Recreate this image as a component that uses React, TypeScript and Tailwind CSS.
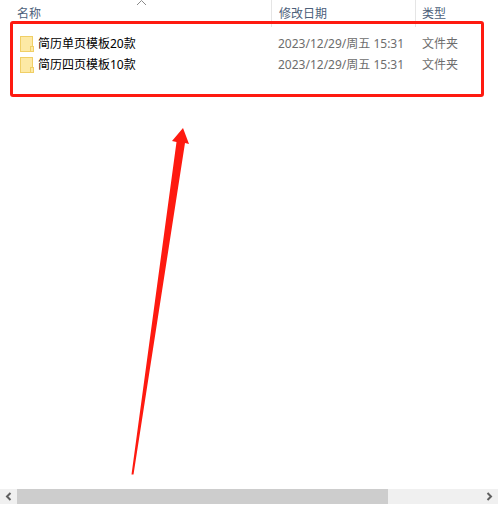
const files = [
  { name: "简历单页模板20款", date: "2023/12/29/周五 15:31", type: "文件夹" },
  { name: "简历四页模板10款", date: "2023/12/29/周五 15:31", type: "文件夹" },
];

const FolderIcon = () => (
  <svg width="14" height="16" viewBox="0 0 14 16" className="shrink-0">
    <rect x="0.5" y="0.5" width="12" height="15" fill="#fde9a5" stroke="#f0cf66" />
    <rect x="10.5" y="10.5" width="3" height="5" fill="#fde9a5" stroke="#f0cf66" />
  </svg>
);

const App = () => {
  return (
    <div
      className="relative flex h-[505px] w-[499px] flex-col overflow-hidden bg-white text-[12px]"
      style={{ fontFamily: '"Noto Sans", "Noto Sans CJK SC", sans-serif' }}
    >
      {/* Header */}
      <div className="flex h-[27px] text-[#4c607a]">
        <div className="relative w-[271px] pl-[17px] pt-[5px]">
          名称
          <svg
            width="11"
            height="6"
            viewBox="0 0 11 6"
            className="absolute left-[136px] top-0"
          >
            <path d="M1 5 L5.5 0.5 L10 5" fill="none" stroke="#8a8a8a" />
          </svg>
        </div>
        <div className="w-[144px] border-l border-[#e5e5e5] pl-[7px] pt-[5px]">修改日期</div>
        <div className="flex-1 border-l border-[#e5e5e5] pl-[6px] pt-[5px]">类型</div>
      </div>

      {/* Rows */}
      <div className="mt-[6px] flex flex-col">
        {files.map((file) => (
          <div key={file.name} className="flex h-[21px] items-center">
            <div className="flex w-[271px] items-center gap-[4px] pl-[20px] text-black">
              <FolderIcon />
              <span>{file.name}</span>
            </div>
            <div className="w-[144px] pl-[7px] text-[#6d6d6d]">{file.date}</div>
            <div className="pl-[7px] text-[#6d6d6d]">{file.type}</div>
          </div>
        ))}
      </div>

      {/* Horizontal scrollbar */}
      <div className="mt-auto mb-px mr-px flex h-[15px] items-center bg-[#f0f0f0]">
        <div className="flex w-[17px] justify-center">
          <svg width="7" height="9" viewBox="0 0 7 9">
            <path d="M5.5 1 L2 4.5 L5.5 8" fill="none" stroke="#606060" strokeWidth="2" />
          </svg>
        </div>
        <div className="h-full w-[371px] bg-[#cdcdcd]" />
        <div className="ml-auto flex w-[17px] justify-center">
          <svg width="7" height="9" viewBox="0 0 7 9">
            <path d="M1.5 1 L5 4.5 L1.5 8" fill="none" stroke="#606060" strokeWidth="2" />
          </svg>
        </div>
      </div>

      {/* Red annotation */}
      <div className="absolute left-[10px] top-[21px] h-[76px] w-[474px] rounded-[3px] border-[3px] border-[#fe1a10]" />
      <svg width="499" height="505" className="pointer-events-none absolute left-0 top-0">
        <polygon
          points="183,128 172,141 176.5,142 131.5,474.5 133.5,474.5 185,143 189,144"
          fill="#fe1a10"
        />
      </svg>
    </div>
  );
};

export default App;
